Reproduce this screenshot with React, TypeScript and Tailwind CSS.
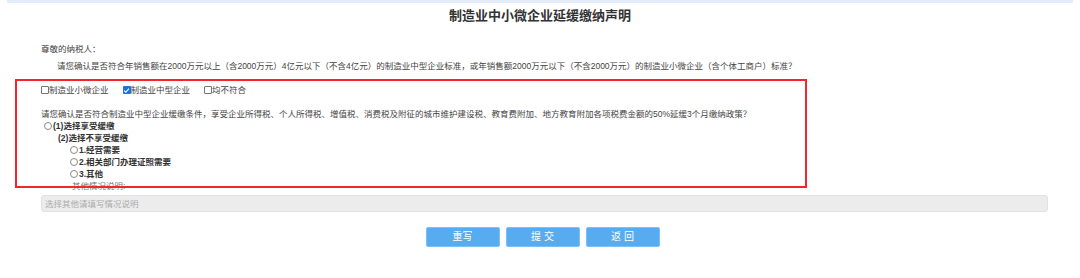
import React from 'react';

// 复选框（自绘，原生控件在各平台外观不一）
function Box({ checked = false }: { checked?: boolean }) {
  if (checked) {
    return (
      <span className="inline-flex w-[8px] h-[8px] items-center justify-center rounded-[1px] bg-[#1e74d9] shrink-0">
        <svg viewBox="0 0 8 8" className="w-[7px] h-[7px]">
          <path d="M1.3 4.2 L3.2 6 L6.8 1.8" fill="none" stroke="#fff" strokeWidth="1.3" />
        </svg>
      </span>
    );
  }
  return <span className="inline-block w-[8px] h-[8px] rounded-[1px] border border-[#767676] bg-white shrink-0" />;
}

function Radio() {
  return <span className="inline-block w-[8px] h-[8px] rounded-full border border-[#8a8a8a] bg-white shrink-0 mr-[1px]" />;
}

const opciones = ['制造业小微企业', '制造业中型企业', '均不符合'];
const motivos = ['1.经营需要', '2.相关部门办理证照需要', '3.其他'];

export default function App() {
  return (
    <div
      className="relative w-full h-[278px] bg-white text-[#444] overflow-hidden"
      style={{ fontFamily: '"Liberation Sans", "Noto Sans CJK SC", sans-serif' }}
    >
      {/* barra superior */}
      <div className="mx-[7px] h-[3px] bg-[#e3ecf8]" />

      <h1 className="h-[26px] leading-[26px] text-center text-[13px] font-bold text-[#333]">
        制造业中小微企业延缓缴纳声明
      </h1>

      <div className="pl-[41px] text-[8.5px] leading-[12px]">
        <p className="mt-[14px]">尊敬的纳税人：</p>
        <p className="mt-[5px] pl-[16px]">
          请您确认是否符合年销售额在2000万元以上（含2000万元）4亿元以下（不含4亿元）的制造业中型企业标准，或年销售额2000万元以下（不含2000万元）的制造业小微企业（含个体工商户）标准？
        </p>

        <div className="mt-[12px] flex items-center gap-[14px]">
          {opciones.map((o, i) => (
            <label key={o} className="flex items-center">
              <Box checked={i === 1} />
              <span>{o}</span>
            </label>
          ))}
        </div>

        <p className="mt-[12px]">
          请您确认是否符合制造业中型企业缓缴条件，享受企业所得税、个人所得税、增值税、消费税及附征的城市维护建设税、教育费附加、地方教育附加各项税费金额的50%延缓3个月缴纳政策？
        </p>

        <div className="flex items-center pl-[3px] font-bold text-[#333]">
          <Radio />
          <span>(1)选择享受缓缴</span>
        </div>
        <div className="pl-[17px] font-bold text-[#333]">(2)选择不享受缓缴</div>
        {motivos.map((m) => (
          <div key={m} className="flex items-center pl-[29px] font-bold text-[#333]">
            <Radio />
            <span>{m}</span>
          </div>
        ))}
        <div className="pl-[31px] text-[#777]">其他情况说明:</div>

        <div className="mt-[3px] w-[1007px] h-[17px] flex items-center px-[3px] rounded-[3px] border border-[#e2e2e2] bg-[#ececec] text-[#ababab]">
          选择其他请填写情况说明
        </div>
      </div>

      <div className="mt-[15px] flex justify-center gap-[6px] pl-[5px]">
        {['重写', '提 交', '返 回'].map((b) => (
          <button
            key={b}
            className="w-[74px] h-[20px] rounded-[2px] border border-[#7cc0f4] bg-[#56acef] text-white text-[10px] leading-[18px]"
          >
            {b}
          </button>
        ))}
      </div>

      {/* recuadro rojo de anotación sobre el formulario */}
      <div className="absolute left-[15px] top-[79px] w-[792px] h-[109px] border-2 border-[#f2262b] pointer-events-none" />
    </div>
  );
}
